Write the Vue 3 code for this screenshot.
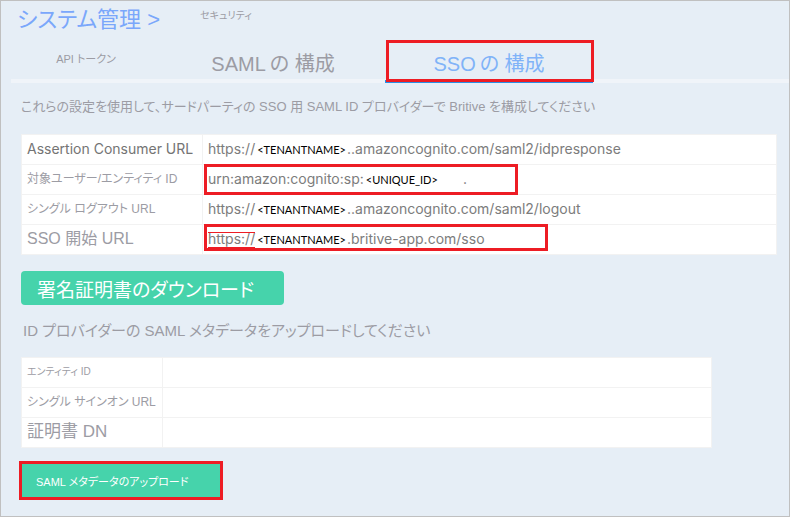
<script setup>
const tabs = [
  { label: 'API トークン', size: 'small' },
  { latin: 'SAML', label: 'の 構成', size: 'large' },
  { latin: 'SSO', label: 'の 構成', size: 'large', active: true },
]

const settings = [
  { label: 'Assertion Consumer URL', size: 'latin', before: 'https://', token: '<TENANTNAME>', after: '..amazoncognito.com/saml2/idpresponse' },
  { label: '対象ユーザー/エンティティ ID', size: 'small', before: 'urn:amazon:cognito:sp:', token: '<UNIQUE_ID>', after: '', mark: 'entity', dot: true },
  { label: 'シングル ログアウト URL', size: 'small', before: 'https://', token: '<TENANTNAME>', after: '..amazoncognito.com/saml2/logout' },
  { label: 'SSO 開始 URL', size: 'large', before: 'https://', token: '<TENANTNAME>', after: '.britive-app.com/sso', mark: 'start', boxed: true },
]

const metadata = [
  { label: 'エンティティ ID', size: 'tiny' },
  { label: 'シングル サインオン URL', size: 'small' },
  { label: '証明書 DN', size: 'larger' },
]
</script>

<template>
  <main class="page">
    <header class="crumbs">
      <a class="crumb-root" href="#">システム管理 &gt;</a>
      <span class="crumb-leaf">セキュリティ</span>
    </header>

    <nav class="tabs">
      <a v-for="tab in tabs" :key="tab.latin + tab.label" href="#" class="tab" :class="[tab.size, { active: tab.active }]">
        <b v-if="tab.latin">{{ tab.latin }}</b>{{ tab.label }}
        <span v-if="tab.active" class="mark mark-tab"></span>
      </a>
    </nav>

    <section class="content">
      <p class="intro">これらの設定を使用して、サードパーティの SSO 用 SAML ID プロバイダーで Britive を構成してください</p>

      <table class="grid settings">
        <tbody>
          <tr v-for="row in settings" :key="row.label">
            <th scope="row" :class="row.size">{{ row.label }}</th>
            <td>
              <div class="value">
                <span :class="{ boxed: row.boxed }">{{ row.before }}</span>
                <span class="token">{{ row.token }}</span>
                <span>{{ row.after }}</span>
                <span v-if="row.dot" class="dot">.</span>
                <span v-if="row.mark" class="mark" :class="'mark-' + row.mark"></span>
              </div>
            </td>
          </tr>
        </tbody>
      </table>

      <button type="button" class="download">署名証明書のダウンロード</button>

      <h2 class="subtitle">ID プロバイダーの SAML メタデータをアップロードしてください</h2>

      <table class="grid metadata">
        <tbody>
          <tr v-for="row in metadata" :key="row.label">
            <th scope="row" :class="row.size">{{ row.label }}</th>
            <td></td>
          </tr>
        </tbody>
      </table>

      <button type="button" class="upload">SAML メタデータのアップロード</button>
    </section>
  </main>
</template>

<style>
body {
  background: #e6eef6;
}
</style>

<style scoped>
.page {
  box-sizing: border-box;
  min-height: 100vh;
  border: 1px solid #c0c0c0;
  background: #e6eef6;
  color: #9c9ca4;
  font-family: "Liberation Sans", "Noto Sans CJK JP", sans-serif;
  font-feature-settings: "palt";
}
a {
  color: inherit;
  text-decoration: none;
}
.crumbs {
  display: flex;
  gap: 40px;
  height: 39px;
  padding-left: 16px;
}
.crumb-root {
  color: #7aa7fb;
  font-size: 22px;
  line-height: 38px;
  white-space: nowrap;
}
.crumb-leaf {
  font-size: 10px;
  line-height: 30px;
}
.tabs {
  display: grid;
  grid-template-columns: 150px 224px 208px 1fr;
  height: 39px;
  margin-left: 10px;
  border-bottom: 4px solid #f0f4f9;
}
.tab {
  position: relative;
  text-align: center;
  white-space: nowrap;
}
.tab.small {
  font-size: 11px;
  line-height: 38px;
}
.tab.large {
  font-size: 20px;
  line-height: 48px;
}
.tab b {
  margin-right: 4px;
  font-weight: 500;
}
.tab.active {
  height: 40px;
  border-bottom: 3px solid #2a8fe6;
  color: #80b3f8;
}
.mark {
  position: absolute;
  box-sizing: border-box;
  border: 3px solid #ed1c24;
  pointer-events: none;
}
.mark-tab {
  inset: 0 -1px -2px 1px;
}
.content {
  padding: 0 12px 16px 20px;
}
.intro {
  margin: 0 0 3px;
  font-size: 13px;
  line-height: 48px;
  white-space: nowrap;
}
.grid {
  table-layout: fixed;
  width: 100%;
  border-collapse: collapse;
  background: #fff;
}
.grid th,
.grid td {
  box-sizing: border-box;
  height: 30px;
  padding: 0 0 2px 5px;
  border: 1px solid #f2f2f2;
  line-height: 26px;
  text-align: left;
  white-space: nowrap;
}
.grid th {
  font-weight: 400;
}
.settings th {
  width: 181px;
}
.tiny {
  font-size: 10px;
}
.small {
  font-size: 12px;
}
.large {
  font-size: 16px;
}
.larger {
  font-size: 17px;
}
.grid .latin {
  color: #747474;
  font-family: Inter, sans-serif;
  font-size: 14px;
}
.value {
  position: relative;
  display: flex;
  align-items: baseline;
  height: 26px;
  color: #7c7c7c;
  font-family: Inter, sans-serif;
  font-size: 14px;
}
.token {
  margin: 0 1px 0 2px;
  color: #000;
  font-family: Lato, sans-serif;
  font-size: 11px;
  line-height: 20px;
}
.dot {
  margin-left: 24px;
}
.boxed {
  position: relative;
}
.boxed::after {
  content: "";
  position: absolute;
  inset: 6px 0 4px;
  border: solid #ed1c24;
  border-width: 1px 0;
}
.mark-entity {
  top: -2px;
  left: -4px;
  width: 314px;
  height: 31px;
}
.mark-start {
  top: -2px;
  left: -4px;
  width: 344px;
  height: 27px;
}
button {
  display: block;
  border: 0;
  background: #46d3ab;
  color: #fff;
  font-family: inherit;
  font-feature-settings: inherit;
  text-align: left;
  white-space: nowrap;
}
.download {
  min-width: 263px;
  height: 34px;
  margin-top: 16px;
  padding: 0 16px;
  border-radius: 4px;
  font-size: 19px;
}
.subtitle {
  margin: 0;
  padding: 0 2px;
  font-weight: 400;
  font-size: 15px;
  line-height: 52px;
  white-space: nowrap;
}
.metadata {
  width: 691px;
  max-width: 100%;
}
.metadata th {
  width: 141px;
}
.upload {
  min-width: 204px;
  height: 39px;
  margin: 13px 0 0 -2px;
  padding: 0 14px;
  border: 3px solid #ed1c24;
  font-size: 11px;
}
</style>
